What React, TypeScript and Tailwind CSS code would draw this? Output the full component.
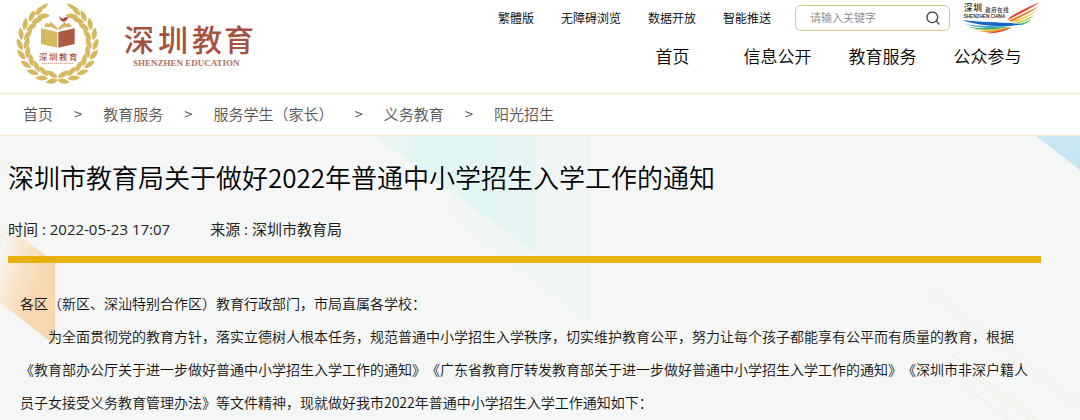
// src/App.tsx
import { FiSearch } from 'react-icons/fi';

const topLinks = ['繁體版', '无障碍浏览', '数据开放', '智能推送'];
const navLinks = ['首页', '信息公开', '教育服务', '公众参与'];
const crumbs = ['首页', '教育服务', '服务学生（家长）', '义务教育', '阳光招生'];

// leaf positions of the wreath, in degrees from the bottom centre
const leafAngles = [6, 22, 38, 54, 70, 86, 102, 118, 134, 148];

const Leaves = () => (
  <g fill="#d6b861">
    {leafAngles.map((a) => (
      <g key={a} transform={`rotate(${-a} 0 0)`}>
        <path d="M-10 101 C-4 88 10 81 25 84 C20 97 6 106 -10 101Z" />
        <path d="M-12 108 C0 101 16 106 24 120 C10 125 -4 121 -12 108Z" />
      </g>
    ))}
    <path d="M55 -98 C52 -112 42 -120 28 -121 C32 -109 42 -101 55 -98Z" />
  </g>
);

const Emblem = () => (
  <svg className="h-[88px] w-[85px] shrink-0" viewBox="45 0 255 264" aria-hidden="true">
    <g transform="translate(173 131)">
      <Leaves />
      <g transform="scale(-1 1)">
        <Leaves />
      </g>
    </g>
    <path d="M123 85 L172 96 V143 L123 132Z" fill="#d6b861" />
    <path d="M175 96 L224 85 V132 L175 143Z" fill="#ac5a41" />
    <path d="M131 80 L140 68 L168 82 L172 91 L155 82Z M145 74 L153 65 L172 84 L172 91Z" fill="#d6b861" />
    <path d="M216 80 L207 68 L179 82 L175 91 L192 82Z M202 74 L194 65 L175 84 L175 91Z" fill="#d6b861" />
    <path d="M178 46 C181 55 185 55 190 56 C194 52 199 51 206 53 C201 57 198 64 190 65 C183 64 178 57 178 46Z" fill="#b1422f" />
    <text
      x="117 147 177 207"
      y="179"
      fontSize="25"
      fontWeight="500"
      fill="#a5523f"
      className="font-['Noto_Sans_CJK_SC',sans-serif]"
    >
      深圳教育
    </text>
    <path d="M126 190H222" stroke="#c99a8c" strokeWidth="3" strokeDasharray="4 2" />
  </svg>
);

const Wordmark = () => (
  <svg className="h-[64px] w-[144px] shrink-0" viewBox="0 0 144 64" role="img" aria-label="深圳教育">
    <text
      x="0 34 68 100"
      y="39"
      fontSize="30"
      fontWeight="500"
      fill="#a5523f"
      className="font-['Noto_Sans_CJK_SC',sans-serif]"
    >
      深圳教育
    </text>
    <text x="9" y="54" fontSize="9" fontWeight="700" fill="#b3705f" className="font-['Liberation_Serif',serif]">
      SHENZHEN EDUCATION
    </text>
  </svg>
);

const ShenzhenLogo = () => (
  <svg className="h-[35px] w-[79px]" viewBox="36 0 237 105" aria-hidden="true">
    <g fill="#222" className="font-['Noto_Sans_CJK_SC',sans-serif]">
      <text x="42 70" y="32" fontSize="26" fontWeight="500">深圳</text>
      <text x="106 124 142 160" y="36" fontSize="16" fontWeight="500">政府在线</text>
    </g>
    <text x="41" y="53" fontSize="14" fontWeight="700" fill="#333" className="font-['Liberation_Sans',sans-serif]">
      SHENZHEN CHINA
    </text>
    <path d="M271 6 C240 18 208 33 179 52 L172 61 C206 43 242 25 271 6Z" fill="#e5412f" />
    <path d="M267 18 C236 35 205 47 175 63 L187 64 C214 51 244 37 267 18Z" fill="#f07d2c" />
    <path d="M262 31 C237 46 208 56 184 66 L197 67 C220 57 243 47 262 31Z" fill="#f6c52f" />
    <path d="M254 44 C235 56 213 62 196 69 L207 70 C224 64 241 57 254 44Z" fill="#a6cf43" />
    <path d="M244 57 C230 67 217 70 203 72 L216 75 C228 70 237 66 244 57Z" fill="#35a968" />
    <path d="M37 61 C90 67 150 66 216 72 C173 84 92 80 37 61Z" fill="#1766bd" />
    <path d="M41 70 C83 81 126 78 170 79 C127 87 79 86 41 70Z" fill="#3c9ee0" />
    <path d="M54 80 C89 87 129 83 179 80 C137 91 90 93 54 80Z" fill="#39a85c" />
    <path d="M70 88 C104 92 144 87 184 80 C150 92 105 98 70 88Z" fill="#d7d341" />
    <path d="M87 94 C119 95 151 89 184 81 C155 94 119 101 87 94Z" fill="#f2912e" />
    <path d="M108 99 C136 96 160 90 186 81 C164 95 136 102 108 99Z" fill="#e04330" />
  </svg>
);

const Backdrop = () => (
  <svg
    className="absolute inset-0 h-full w-full"
    viewBox="0 0 1080 284"
    preserveAspectRatio="xMidYMin slice"
    aria-hidden="true"
  >
    <defs>
      <linearGradient id="teal" x1="0" y1="0" x2="1" y2="0">
        <stop offset="0" stopColor="#ecf5f4" />
        <stop offset="0.35" stopColor="#e0f6f2" />
        <stop offset="1" stopColor="#e6f5f3" />
      </linearGradient>
      <linearGradient id="mist" x1="0" y1="0" x2="1" y2="0">
        <stop offset="0" stopColor="#f4f6f7" />
        <stop offset="1" stopColor="#f0f5f6" />
      </linearGradient>
      <linearGradient id="orange" x1="0.1" y1="0.15" x2="0.7" y2="0.6">
        <stop offset="0" stopColor="#f6f4f0" />
        <stop offset="0.5" stopColor="#f8e4c9" />
        <stop offset="1" stopColor="#f7d7ae" />
      </linearGradient>
      <linearGradient id="sky" x1="0" y1="0" x2="1" y2="1">
        <stop offset="0" stopColor="#cbe7f0" />
        <stop offset="1" stopColor="#c3e5f3" />
      </linearGradient>
    </defs>
    <path d="M430 68 L536 0 H590 V187Z" fill="url(#mist)" />
    <path d="M374 0 L536 118 V0Z" fill="url(#teal)" />
    <path d="M0 84 L55 127 V209 L0 167Z" fill="url(#orange)" />
    <path d="M1036 0 H1080 V34Z" fill="url(#sky)" />
    <g fill="none" stroke="#f6e7d3" strokeWidth="1">
      <path d="M0 24 L36 51 M0 31 L30 54" opacity="0.4" />
      <path d="M0 92 L46 126 M0 99 L36 126" />
      <path d="M928 150 L1080 266 M928 158 L1080 275" opacity="0.5" />
      <path d="M952 219 L1038 284 M956 227 L1031 284 M964 249 L1010 284" />
    </g>
  </svg>
);

export default function App() {
  return (
    <div
      lang="zh-CN"
      className="flex min-h-screen flex-col bg-white font-['Noto_Sans_CJK_SC',sans-serif] font-[350] text-[#111] [text-spacing-trim:space-all]"
    >
      <header className="flex h-[94px] items-start justify-between border-b border-[#f8e8c4] pr-[39px] pl-[15px]">
        <a href="#" className="flex items-start gap-6">
          <Emblem />
          <span className="pt-3">
            <Wordmark />
          </span>
        </a>

        <div className="flex flex-col items-end">
          <div className="flex h-[35px] items-center">
            <ul className="flex gap-[27px] text-xs text-black">
              {topLinks.map((link) => (
                <li key={link}>
                  <a href="#">{link}</a>
                </li>
              ))}
            </ul>
            <form
              className="mr-3 ml-6 flex h-[26px] w-[155px] items-center rounded-md border border-[#dcc48d] pr-2 pl-[14px]"
              onSubmit={(e) => e.preventDefault()}
            >
              <input
                type="text"
                aria-label="请输入关键字"
                placeholder="请输入关键字"
                className="min-w-0 flex-1 text-[11px] outline-none placeholder:text-[#888]"
              />
              <button type="submit" aria-label="搜索">
                <FiSearch className="h-4 w-4 text-[#444]" />
              </button>
            </form>
            <a href="#" aria-label="深圳政府在线">
              <ShenzhenLogo />
            </a>
          </div>
          <nav className="grid h-[42px] grid-cols-[repeat(4,105px)] items-center pr-px text-center text-[17px] text-black">
            {navLinks.map((link) => (
              <a key={link} href="#">
                {link}
              </a>
            ))}
          </nav>
        </div>
      </header>

      <nav className="flex h-[42px] items-center border-b border-[#f8e8c4] pl-[23px] text-[15px] text-[#555]">
        <ol className="flex items-center gap-[21px]">
          {crumbs.map((crumb, i) => (
            <li key={crumb} className="flex items-center gap-[21px]">
              {i > 0 && <span>&gt;</span>}
              <a href="#">{crumb}</a>
            </li>
          ))}
        </ol>
      </nav>

      <main className="relative flex-1 bg-[#f5f7f7]">
        <Backdrop />
        <article className="relative pr-[39px] pl-2">
          <h1 className="pt-[23px] text-[26px] leading-9 text-black">
            深圳市教育局关于做好2022年普通中小学招生入学工作的通知
          </h1>
          <div className="mt-6 flex gap-10 font-['Open_Sans','Noto_Sans_CJK_SC',sans-serif] text-[15px] leading-5 font-normal text-[#222]">
            <span>时间 : 2022-05-23 17:07</span>
            <span>来源 : 深圳市教育局</span>
          </div>
          <hr className="mt-[17px] h-[7px] border-0 bg-[#e9b10f]" />
          <div className="px-3 pt-6 text-sm leading-[33px]">
            <p>各区（新区、深汕特别合作区）教育行政部门，市局直属各学校：</p>
            <p className="indent-7">
              为全面贯彻党的教育方针，落实立德树人根本任务，规范普通中小学招生入学秩序，切实维护教育公平，努力让每个孩子都能享有公平而有质量的教育，根据《教育部办公厅关于进一步做好普通中小学招生入学工作的通知》《广东省教育厅转发教育部关于进一步做好普通中小学招生入学工作的通知》《深圳市非深户籍人员子女接受义务教育管理办法》等文件精神，现就做好我市2022年普通中小学招生入学工作通知如下：
            </p>
          </div>
        </article>
      </main>
    </div>
  );
}
